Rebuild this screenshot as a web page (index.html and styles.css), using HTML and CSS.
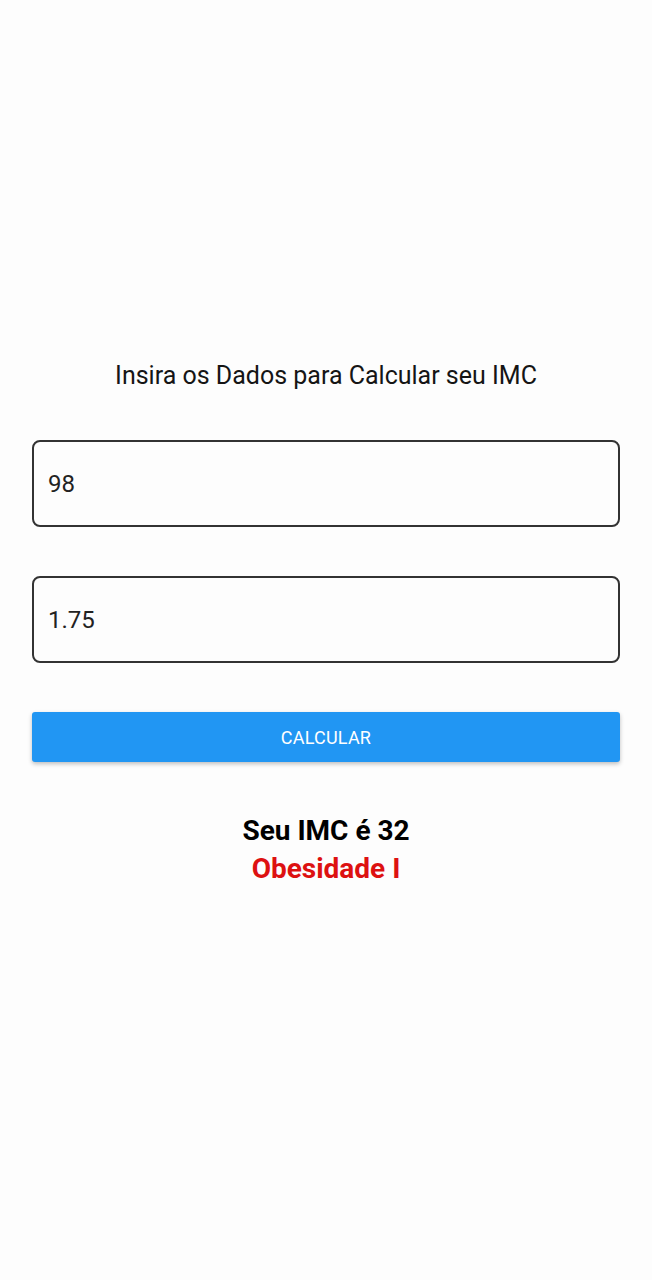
FILE: index.html
```html
<!DOCTYPE html>
<html lang="pt-BR">
<head>
<meta charset="utf-8">
<title>IMC</title>
<link rel="stylesheet" href="styles.css">
</head>
<body>
<main class="screen">
  <h1 class="title">Insira os Dados para Calcular seu IMC</h1>
  <div class="field">98</div>
  <div class="field">1.75</div>
  <button class="btn">CALCULAR</button>
  <div class="result">
    <p class="value">Seu IMC é 32</p>
    <p class="class">Obesidade I</p>
  </div>
</main>
</body>
</html>
```
FILE: styles.css
```css
html, body {
  margin: 0;
  padding: 0;
  background: #fdfdfd;
}
body {
  font-family: Roboto, "Noto Sans", sans-serif;
  color: #111;
  height: 1280px;
}
.screen {
  display: flex;
  flex-direction: column;
  padding: 360px 32px 0;
}
.title {
  margin: 0;
  font-size: 25px;
  font-weight: 400;
  line-height: 32px;
  text-align: center;
  color: #151515;
}
.field {
  margin-top: 48px;
  height: 87px;
  box-sizing: border-box;
  border: 2px solid #333;
  border-radius: 8px;
  padding: 0 14px;
  display: flex;
  align-items: center;
  font-size: 24px;
  color: #222;
}
.field + .field {
  margin-top: 49px;
}
.btn {
  margin-top: 49px;
  height: 50px;
  border: 0;
  border-radius: 3px;
  background: #2196f3;
  color: #fff;
  font-family: Roboto, "Noto Sans", sans-serif;
  font-size: 18px;
  letter-spacing: 0.2px;
  box-shadow: 0 2px 4px rgba(0,0,0,0.25);
}
.result {
  margin-top: 50px;
  text-align: center;
}
.result p {
  margin: 0;
  font-size: 28px;
  font-weight: 700;
  line-height: 38px;
}
.value { color: #000; }
.class { color: #dd1111; }
```
